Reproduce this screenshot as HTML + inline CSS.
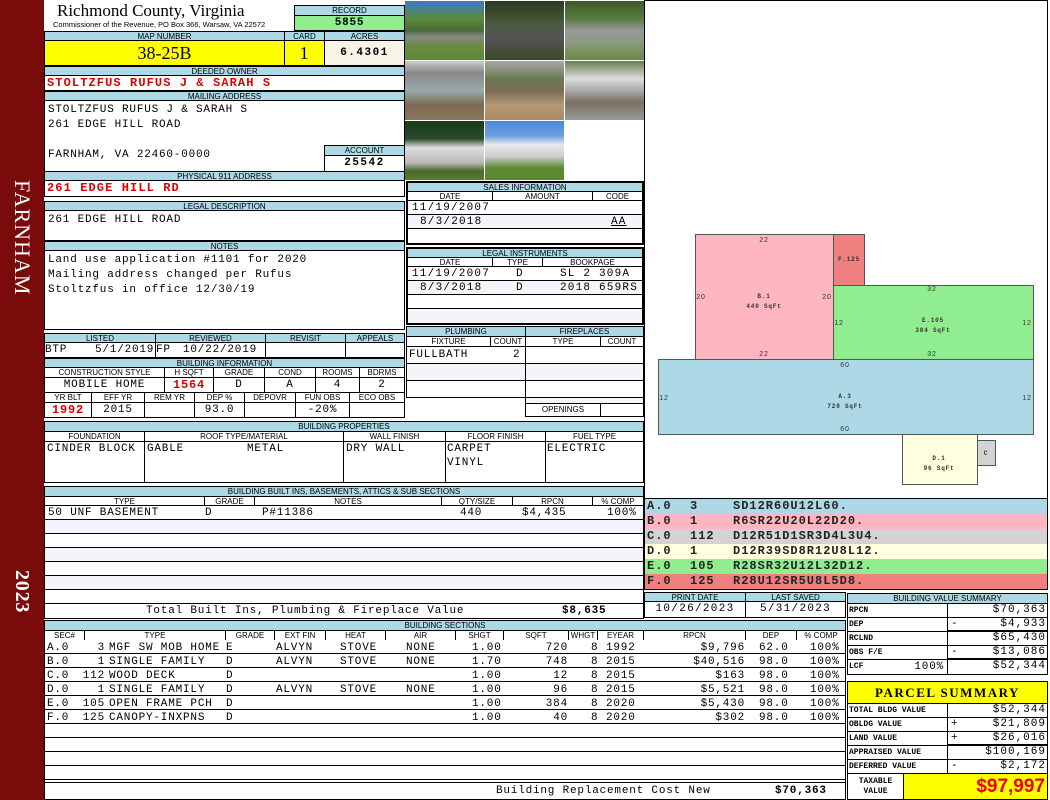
<!DOCTYPE html>
<html><head><meta charset="utf-8"><style>
*{margin:0;padding:0;box-sizing:border-box}
body{width:1050px;height:800px;background:#fff;position:relative;overflow:hidden;font-family:"Liberation Mono",monospace;font-size:11px;color:#000;letter-spacing:0.8px}
div{position:absolute}
.hd{background:#add8e6;border:1px solid #000;font:8px/9px "Liberation Sans",sans-serif;text-align:center;white-space:nowrap;overflow:hidden;letter-spacing:0}
.b{border:1px solid #000;background:#fff;white-space:nowrap;overflow:hidden}
.t{white-space:pre;line-height:14px}
.r{color:#d00;font-weight:bold}
.ph{overflow:hidden}
</style></head><body>
<div style="left:0;top:0;width:44px;height:800px;background:#7a0b0b"></div>
<div class="t" style="left:22px;top:180px;transform-origin:0 0;transform:rotate(90deg) translate(0,-11px);color:#fff;font:22px 'Liberation Serif',serif;letter-spacing:1px;line-height:22px">FARNHAM</div>
<div class="t" style="left:22px;top:570px;transform-origin:0 0;transform:rotate(90deg) translate(0,-11px);color:#fff;font:bold 20px 'Liberation Serif',serif;line-height:22px">2023</div>

<div class="t" style="left:57px;top:2px;font:17px/18px 'Liberation Serif',serif;letter-spacing:0">Richmond County, Virginia</div>
<div class="t" style="left:53px;top:20px;font:7.5px/9px 'Liberation Sans',sans-serif;letter-spacing:0">Commissioner of the Revenue, PO Box 366, Warsaw, VA 22572</div>
<div class="hd" style="left:294px;top:5px;width:111px;height:11px">RECORD</div>
<div class="b" style="left:294px;top:15px;width:111px;height:16px;background:#90ee90;text-align:center;font-weight:bold;line-height:14px">5855</div>
<div class="hd" style="left:44px;top:31px;width:241px;height:10px">MAP NUMBER</div>
<div class="hd" style="left:284px;top:31px;width:41px;height:10px">CARD</div>
<div class="hd" style="left:324px;top:31px;width:81px;height:10px">ACRES</div>
<div class="b" style="left:44px;top:40px;width:241px;height:26px;background:#ff0;text-align:center;font:18px/24px 'Liberation Serif',serif;letter-spacing:0">38-25B</div>
<div class="b" style="left:284px;top:40px;width:41px;height:26px;background:#ff0;text-align:center;font:18px/24px 'Liberation Serif',serif">1</div>
<div class="b" style="left:324px;top:40px;width:81px;height:26px;background:#f6f4e6;text-align:center;font-weight:bold;line-height:24px;letter-spacing:1.5px">6.4301</div>
<div class="hd" style="left:44px;top:66px;width:361px;height:10px">DEEDED OWNER</div>
<div class="b r" style="left:44px;top:75px;width:361px;height:16px;padding-left:2px;line-height:14px;font-size:12px;letter-spacing:1.1px">STOLTZFUS RUFUS J &amp; SARAH S</div>
<div class="hd" style="left:44px;top:91px;width:361px;height:10px">MAILING ADDRESS</div>
<div class="b" style="left:44px;top:100px;width:361px;height:72px;padding:2px 0 0 3px;line-height:15px">STOLTZFUS RUFUS J &amp; SARAH S<br>261 EDGE HILL ROAD<br><br>FARNHAM, VA 22460-0000</div>
<div class="hd" style="left:324px;top:145px;width:81px;height:11px">ACCOUNT</div>
<div class="b" style="left:324px;top:155px;width:81px;height:17px;text-align:center;font-weight:bold;line-height:15px;letter-spacing:1.5px">25542</div>
<div class="hd" style="left:44px;top:171px;width:361px;height:10px">PHYSICAL 911 ADDRESS</div>
<div class="b r" style="left:44px;top:180px;width:361px;height:17px;padding-left:2px;line-height:15px;font-size:12px;letter-spacing:1.1px">261 EDGE HILL RD</div>
<div class="hd" style="left:44px;top:201px;width:361px;height:10px">LEGAL DESCRIPTION</div>
<div class="b" style="left:44px;top:210px;width:361px;height:31px;padding:2px 3px;line-height:14px">261 EDGE HILL ROAD</div>
<div class="hd" style="left:44px;top:241px;width:361px;height:10px">NOTES</div>
<div class="b" style="left:44px;top:250px;width:361px;height:80px;padding:2px 3px;line-height:15px">Land use application #1101 for 2020<br>Mailing address changed per Rufus<br>Stoltzfus in office 12/30/19</div>

<div class="hd" style="left:44px;top:333px;width:112px;height:10px">LISTED</div>
<div class="hd" style="left:155px;top:333px;width:111px;height:10px">REVIEWED</div>
<div class="hd" style="left:265px;top:333px;width:81px;height:10px">REVISIT</div>
<div class="hd" style="left:345px;top:333px;width:60px;height:10px">APPEALS</div>
<div class="b" style="left:44px;top:342px;width:112px;height:16px;line-height:14px">BTP<span style="position:absolute;left:50px">5/1/2019</span></div>
<div class="b" style="left:155px;top:342px;width:111px;height:16px;line-height:14px">FP<span style="position:absolute;left:27px">10/22/2019</span></div>
<div class="b" style="left:265px;top:342px;width:81px;height:16px"></div>
<div class="b" style="left:345px;top:342px;width:60px;height:16px"></div>
<div class="hd" style="left:44px;top:358px;width:361px;height:10px">BUILDING INFORMATION</div>
<div class="hd" style="left:44px;top:367px;width:121px;height:11px;background:#fff">CONSTRUCTION STYLE</div>
<div class="hd" style="left:164px;top:367px;width:50px;height:11px;background:#fff">H SQFT</div>
<div class="hd" style="left:213px;top:367px;width:52px;height:11px;background:#fff">GRADE</div>
<div class="hd" style="left:264px;top:367px;width:52px;height:11px;background:#fff">COND</div>
<div class="hd" style="left:315px;top:367px;width:45px;height:11px;background:#fff">ROOMS</div>
<div class="hd" style="left:359px;top:367px;width:46px;height:11px;background:#fff">BDRMS</div>
<div class="b" style="left:44px;top:377px;width:121px;height:16px;text-align:center;line-height:14px">MOBILE HOME</div>
<div class="b r" style="left:164px;top:377px;width:50px;height:16px;text-align:center;line-height:14px;font-size:12px">1564</div>
<div class="b" style="left:213px;top:377px;width:52px;height:16px;text-align:center;line-height:14px">D</div>
<div class="b" style="left:264px;top:377px;width:52px;height:16px;text-align:center;line-height:14px">A</div>
<div class="b" style="left:315px;top:377px;width:45px;height:16px;text-align:center;line-height:14px">4</div>
<div class="b" style="left:359px;top:377px;width:46px;height:16px;text-align:center;line-height:14px">2</div>
<div class="hd" style="left:44px;top:392px;width:48px;height:11px;background:#fff">YR BLT</div>
<div class="hd" style="left:91px;top:392px;width:54px;height:11px;background:#fff">EFF YR</div>
<div class="hd" style="left:144px;top:392px;width:51px;height:11px;background:#fff">REM YR</div>
<div class="hd" style="left:194px;top:392px;width:51px;height:11px;background:#fff">DEP %</div>
<div class="hd" style="left:244px;top:392px;width:52px;height:11px;background:#fff">DEPOVR</div>
<div class="hd" style="left:295px;top:392px;width:55px;height:11px;background:#fff">FUN OBS</div>
<div class="hd" style="left:349px;top:392px;width:56px;height:11px;background:#fff">ECO OBS</div>
<div class="b r" style="left:44px;top:402px;width:48px;height:16px;text-align:center;line-height:14px;font-size:12px">1992</div>
<div class="b" style="left:91px;top:402px;width:54px;height:16px;text-align:center;line-height:14px">2015</div>
<div class="b" style="left:144px;top:402px;width:51px;height:16px"></div>
<div class="b" style="left:194px;top:402px;width:51px;height:16px;text-align:center;line-height:14px">93.0</div>
<div class="b" style="left:244px;top:402px;width:52px;height:16px"></div>
<div class="b" style="left:295px;top:402px;width:55px;height:16px;text-align:center;line-height:14px">-20%</div>
<div class="b" style="left:349px;top:402px;width:56px;height:16px"></div>

<div class="ph" style="left:405px;top:1px;width:79px;height:59px;background:linear-gradient(#3a78c8 0,#5a8a3a 30%,#4a6a3a 50%,#888 60%,#6a8a40 75%,#5d8a35 100%)"></div>
<div class="ph" style="left:485px;top:1px;width:79px;height:59px;background:linear-gradient(#2a3a20,#4a5a40 40%,#555 60%,#3a4a2a 100%)"></div>
<div class="ph" style="left:565px;top:1px;width:79px;height:59px;background:linear-gradient(#3a5a2a,#5a7a40 30%,#999 50%,#8a9a80 70%,#6a8a40 100%)"></div>
<div class="ph" style="left:405px;top:61px;width:79px;height:59px;background:linear-gradient(#ccc 0,#888 20%,#9aa 50%,#7a6a50 75%,#8a7560 100%)"></div>
<div class="ph" style="left:485px;top:61px;width:79px;height:59px;background:linear-gradient(#a8a8a8,#6a7a50 30%,#7a6a55 50%,#b59a75 75%,#a88a65 100%)"></div>
<div class="ph" style="left:565px;top:61px;width:79px;height:59px;background:linear-gradient(#6a7a50,#ddd 30%,#aaa 50%,#7a7060 70%,#999 100%)"></div>
<div class="ph" style="left:405px;top:121px;width:79px;height:59px;background:linear-gradient(#1a3a1a,#2a4a2a 30%,#ddd 45%,#bbb 70%,#4a6a2a 85%,#5a7a30 100%)"></div>
<div class="ph" style="left:485px;top:121px;width:79px;height:59px;background:linear-gradient(#4a88d8,#6aa0e0 25%,#e8e8e8 40%,#ccc 60%,#5a8a30 80%,#5a8a30 100%)"></div>

<div class="b" style="left:406px;top:181px;width:238px;height:64px"></div>
<div class="hd" style="left:407px;top:182px;width:236px;height:10px">SALES INFORMATION</div>
<div class="hd" style="left:407px;top:191px;width:86px;height:10px;background:#fff">DATE</div>
<div class="hd" style="left:492px;top:191px;width:101px;height:10px;background:#fff">AMOUNT</div>
<div class="hd" style="left:592px;top:191px;width:51px;height:10px;background:#fff">CODE</div>
<div class="b" style="left:407px;top:200px;width:236px;height:15px;line-height:15px;padding-left:4px;letter-spacing:1.2px">11/19/2007</div>
<div class="b" style="left:407px;top:214px;width:236px;height:15px;line-height:15px;padding-left:12px;background:#f4f4fa;letter-spacing:1.2px">8/3/2018<span style="position:absolute;left:203px;text-decoration:underline">AA</span></div>
<div class="b" style="left:407px;top:228px;width:236px;height:16px"></div>
<div class="b" style="left:406px;top:247px;width:238px;height:78px"></div>
<div class="hd" style="left:407px;top:248px;width:236px;height:10px">LEGAL INSTRUMENTS</div>
<div class="hd" style="left:407px;top:257px;width:86px;height:10px;background:#fff">DATE</div>
<div class="hd" style="left:492px;top:257px;width:51px;height:10px;background:#fff">TYPE</div>
<div class="hd" style="left:542px;top:257px;width:101px;height:10px;background:#fff">BOOKPAGE</div>
<div class="b" style="left:407px;top:266px;width:236px;height:15px;line-height:15px;padding-left:4px;letter-spacing:1.2px">11/19/2007<span style="position:absolute;left:108px">D</span><span style="position:absolute;left:152px">SL 2 309A</span></div>
<div class="b" style="left:407px;top:280px;width:236px;height:15px;line-height:15px;padding-left:12px;background:#f4f4fa;letter-spacing:1.2px">8/3/2018<span style="position:absolute;left:108px">D</span><span style="position:absolute;left:152px">2018 659RS</span></div>
<div class="b" style="left:407px;top:294px;width:236px;height:15px"></div>
<div class="b" style="left:407px;top:308px;width:236px;height:16px;background:#f4f4fa"></div>

<div class="hd" style="left:406px;top:326px;width:120px;height:11px">PLUMBING</div>
<div class="hd" style="left:525px;top:326px;width:119px;height:11px">FIREPLACES</div>
<div class="hd" style="left:406px;top:336px;width:85px;height:11px;background:#fff">FIXTURE</div>
<div class="hd" style="left:490px;top:336px;width:36px;height:11px;background:#fff">COUNT</div>
<div class="hd" style="left:525px;top:336px;width:76px;height:11px;background:#fff">TYPE</div>
<div class="hd" style="left:600px;top:336px;width:44px;height:11px;background:#fff">COUNT</div>
<div class="b" style="left:406px;top:346px;width:120px;height:18px;line-height:16px;padding-left:2px">FULLBATH<span style="position:absolute;left:106px">2</span></div>
<div class="b" style="left:406px;top:363px;width:120px;height:18px;background:#f4f4fa"></div>
<div class="b" style="left:406px;top:380px;width:120px;height:18px"></div>
<div style="left:406px;top:397px;width:120px;height:1px;background:#000"></div>
<div class="b" style="left:525px;top:346px;width:119px;height:18px"></div>
<div class="b" style="left:525px;top:363px;width:119px;height:18px;background:#f4f4fa"></div>
<div class="b" style="left:525px;top:380px;width:119px;height:18px"></div>
<div class="b" style="left:525px;top:397px;width:119px;height:7px;background:#f4f4fa"></div>
<div class="b" style="left:525px;top:403px;width:76px;height:14px;font:8px/12px 'Liberation Sans',sans-serif;text-align:center;letter-spacing:0">OPENINGS</div>
<div class="b" style="left:600px;top:403px;width:44px;height:14px"></div>

<div class="hd" style="left:44px;top:421px;width:600px;height:11px">BUILDING PROPERTIES</div>
<div class="hd" style="left:44px;top:431px;width:101px;height:11px;background:#fff">FOUNDATION</div>
<div class="hd" style="left:144px;top:431px;width:200px;height:11px;background:#fff">ROOF TYPE/MATERIAL</div>
<div class="hd" style="left:343px;top:431px;width:103px;height:11px;background:#fff">WALL FINISH</div>
<div class="hd" style="left:445px;top:431px;width:101px;height:11px;background:#fff">FLOOR FINISH</div>
<div class="hd" style="left:545px;top:431px;width:99px;height:11px;background:#fff">FUEL TYPE</div>
<div class="b" style="left:44px;top:441px;width:101px;height:42px;padding:0 2px;line-height:14px">CINDER BLOCK</div>
<div class="b" style="left:144px;top:441px;width:200px;height:42px;padding:0 2px;line-height:14px">GABLE<span style="position:absolute;left:102px">METAL</span></div>
<div class="b" style="left:343px;top:441px;width:103px;height:42px;padding:0 2px;line-height:14px">DRY WALL</div>
<div class="b" style="left:445px;top:441px;width:101px;height:42px;padding:0 1px;line-height:14px">CARPET<br>VINYL</div>
<div class="b" style="left:545px;top:441px;width:99px;height:42px;padding:0 1px;line-height:14px">ELECTRIC</div>

<div class="hd" style="left:44px;top:486px;width:600px;height:11px">BUILDING BUILT INS, BASEMENTS, ATTICS &amp; SUB SECTIONS</div>
<div class="hd" style="left:44px;top:496px;width:161px;height:10px;background:#fff">TYPE</div>
<div class="hd" style="left:204px;top:496px;width:51px;height:10px;background:#fff">GRADE</div>
<div class="hd" style="left:254px;top:496px;width:188px;height:10px;background:#fff">NOTES</div>
<div class="hd" style="left:441px;top:496px;width:72px;height:10px;background:#fff">QTY/SIZE</div>
<div class="hd" style="left:512px;top:496px;width:81px;height:10px;background:#fff">RPCN</div>
<div class="hd" style="left:592px;top:496px;width:52px;height:10px;background:#fff">% COMP</div>
<div class="b" style="left:44px;top:505px;width:600px;height:15px;line-height:14px;padding-left:3px">50 UNF BASEMENT<span style="position:absolute;left:160px">D</span><span style="position:absolute;left:217px">P#11386</span><span style="position:absolute;left:415px">440</span><span style="position:absolute;left:477px">$4,435</span><span style="position:absolute;left:562px">100%</span></div>
<div class="b" style="left:44px;top:519px;width:600px;height:15px;background:#f4f4fa"></div>
<div class="b" style="left:44px;top:533px;width:600px;height:15px"></div>
<div class="b" style="left:44px;top:547px;width:600px;height:15px;background:#f4f4fa"></div>
<div class="b" style="left:44px;top:561px;width:600px;height:15px"></div>
<div class="b" style="left:44px;top:575px;width:600px;height:15px;background:#f4f4fa"></div>
<div class="b" style="left:44px;top:589px;width:600px;height:15px"></div>
<div class="b" style="left:44px;top:603px;width:600px;height:16px;line-height:15px"><span style="position:absolute;left:101px">Total Built Ins, Plumbing &amp; Fireplace Value</span><span style="position:absolute;left:517px;font-weight:bold">$8,635</span></div>

<div class="hd" style="left:44px;top:620px;width:802px;height:11px">BUILDING SECTIONS</div>
<div class="hd" style="left:44px;top:630px;width:41px;height:11px;background:#fff">SEC#</div>
<div class="hd" style="left:84px;top:630px;width:142px;height:11px;background:#fff">TYPE</div>
<div class="hd" style="left:225px;top:630px;width:50px;height:11px;background:#fff">GRADE</div>
<div class="hd" style="left:274px;top:630px;width:52px;height:11px;background:#fff">EXT FIN</div>
<div class="hd" style="left:325px;top:630px;width:61px;height:11px;background:#fff">HEAT</div>
<div class="hd" style="left:385px;top:630px;width:71px;height:11px;background:#fff">AIR</div>
<div class="hd" style="left:455px;top:630px;width:49px;height:11px;background:#fff">SHGT</div>
<div class="hd" style="left:503px;top:630px;width:66px;height:11px;background:#fff">SQFT</div>
<div class="hd" style="left:568px;top:630px;width:30px;height:11px;background:#fff">WHGT</div>
<div class="hd" style="left:597px;top:630px;width:47px;height:11px;background:#fff">EYEAR</div>
<div class="hd" style="left:643px;top:630px;width:103px;height:11px;background:#fff">RPCN</div>
<div class="hd" style="left:745px;top:630px;width:52px;height:11px;background:#fff">DEP</div>
<div class="hd" style="left:796px;top:630px;width:50px;height:11px;background:#fff">% COMP</div>
<div style="left:44px;top:640px;width:802px;height:160px;border:1px solid #000;border-top:none;background:repeating-linear-gradient(#fff 0,#fff 13px,#000 13px,#000 14px)"></div>
<div class="t" style="left:47px;top:641px">A.0
B.0
C.0
D.0
E.0
F.0</div>
<div class="t" style="left:70px;top:641px;width:35px;text-align:right">3
1
112
1
105
125</div>
<div class="t" style="left:109px;top:641px">MGF SW MOB HOME
SINGLE FAMILY
WOOD DECK
SINGLE FAMILY
OPEN FRAME PCH
CANOPY-INXPNS</div>
<div class="t" style="left:226px;top:641px">E
D
D
D
D
D</div>
<div class="t" style="left:276px;top:641px">ALVYN
ALVYN

ALVYN</div>
<div class="t" style="left:340px;top:641px">STOVE
STOVE

STOVE</div>
<div class="t" style="left:406px;top:641px">NONE
NONE

NONE</div>
<div class="t" style="left:472px;top:641px">1.00
1.70
1.00
1.00
1.00
1.00</div>
<div class="t" style="left:503px;top:641px;width:65px;text-align:right">720
748
12
96
384
40</div>
<div class="t" style="left:591px;top:641px">8
8
8
8
8
8</div>
<div class="t" style="left:606px;top:641px">1992
2015
2015
2015
2020
2020</div>
<div class="t" style="left:643px;top:641px;width:102px;text-align:right">$9,796
$40,516
$163
$5,521
$5,430
$302</div>
<div class="t" style="left:759px;top:641px">62.0
98.0
98.0
98.0
98.0
98.0</div>
<div class="t" style="left:810px;top:641px">100%
100%
100%
100%
100%
100%</div>
<div class="b" style="left:44px;top:782px;width:802px;height:18px;line-height:17px;background:#fff"><span style="position:absolute;left:451px">Building Replacement Cost New</span><span style="position:absolute;left:730px;font-weight:bold">$70,363</span></div>

<div style="left:644px;top:0;width:404px;height:498px;border:1px solid #000;border-bottom:none"></div>
<svg style="position:absolute;left:0;top:0" width="1050" height="500" font-family="Liberation Sans" font-size="7">
<rect x="695.5" y="234.5" width="138" height="125" fill="#ffb6c1" stroke="#555"/>
<rect x="833.5" y="234.5" width="31" height="51" fill="#f08080" stroke="#555"/>
<rect x="833.5" y="285.5" width="200" height="74" fill="#90ee90" stroke="#555"/>
<rect x="658.5" y="359.5" width="375" height="75" fill="#add8e6" stroke="#555"/>
<rect x="902.5" y="434.5" width="75" height="50" fill="#ffffe0" stroke="#555"/>
<rect x="977.5" y="440.5" width="18" height="25" fill="#d3d3d3" stroke="#555"/>
<g fill="#333" text-anchor="middle">
<text x="764" y="242">22</text><text x="764" y="356">22</text><text x="701" y="299">20</text><text x="827" y="299">20</text>
<text x="764" y="298" font-family="Liberation Mono" font-weight="bold" font-size="6">B.1</text><text x="764" y="308" font-family="Liberation Mono" font-weight="bold" font-size="6">440 SqFt</text>
<text x="849" y="261" font-family="Liberation Mono" font-weight="bold" font-size="6">F.125</text>
<text x="932" y="291">32</text><text x="932" y="356">32</text><text x="839" y="325">12</text><text x="1027" y="325">12</text>
<text x="933" y="322" font-family="Liberation Mono" font-weight="bold" font-size="6">E.105</text><text x="933" y="332" font-family="Liberation Mono" font-weight="bold" font-size="6">384 SqFt</text>
<text x="845" y="367">60</text><text x="845" y="431">60</text><text x="664" y="400">12</text><text x="1027" y="400">12</text>
<text x="845" y="398" font-family="Liberation Mono" font-weight="bold" font-size="6">A.3</text><text x="845" y="408" font-family="Liberation Mono" font-weight="bold" font-size="6">720 SqFt</text>
<text x="939" y="460" font-family="Liberation Mono" font-weight="bold" font-size="6">D.1</text><text x="939" y="470" font-family="Liberation Mono" font-weight="bold" font-size="6">96 SqFt</text>
<text x="986" y="455" font-family="Liberation Mono" font-weight="bold" font-size="6">C</text>
</g></svg>

<div style="left:644px;top:498px;width:404px;height:92px;border:1px solid #000;font:bold 12px/15px 'Liberation Mono',monospace;letter-spacing:1px;color:#222">
<div style="left:0;top:0;width:402px;height:15px;background:#add8e6"></div>
<div style="left:0;top:15px;width:402px;height:15px;background:#ffb6c1"></div>
<div style="left:0;top:30px;width:402px;height:15px;background:#d3d3d3"></div>
<div style="left:0;top:45px;width:402px;height:15px;background:#ffffe0"></div>
<div style="left:0;top:60px;width:402px;height:15px;background:#90ee90"></div>
<div style="left:0;top:75px;width:402px;height:15px;background:#f08080"></div>
<div class="t" style="left:2px;top:0;line-height:15px">A.0
B.0
C.0
D.0
E.0
F.0</div>
<div class="t" style="left:45px;top:0;line-height:15px">3
1
112
1
105
125</div>
<div class="t" style="left:88px;top:0;line-height:15px">SD12R60U12L60.
R6SR22U20L22D20.
D12R51D1SR3D4L3U4.
D12R39SD8R12U8L12.
R28SR32U12L32D12.
R28U12SR5U8L5D8.</div>
</div>

<div class="hd" style="left:644px;top:592px;width:102px;height:10px">PRINT DATE</div>
<div class="hd" style="left:745px;top:592px;width:101px;height:10px">LAST SAVED</div>
<div class="b" style="left:644px;top:601px;width:102px;height:17px;text-align:center;line-height:15px;letter-spacing:1.3px">10/26/2023</div>
<div class="b" style="left:745px;top:601px;width:101px;height:17px;text-align:center;line-height:15px;letter-spacing:1.3px">5/31/2023</div>

<div class="hd" style="left:847px;top:593px;width:201px;height:11px">BUILDING VALUE SUMMARY</div>
<div style="left:847px;top:603px;width:201px;height:73px;font:bold 8px/14px 'Liberation Mono',monospace;letter-spacing:0">
<div class="b" style="left:0;top:0;width:101px;height:15px;padding-left:1px">RPCN</div>
<div class="b" style="left:0;top:14px;width:101px;height:15px;padding-left:1px">DEP</div>
<div class="b" style="left:0;top:28px;width:101px;height:15px;padding-left:1px">RCLND</div>
<div class="b" style="left:0;top:42px;width:101px;height:15px;padding-left:1px">OBS F/E</div>
<div class="b" style="left:0;top:56px;width:101px;height:16px;padding-left:1px">LCF<span style="position:absolute;right:3px;font:11px/14px 'Liberation Mono';letter-spacing:0.8px">100%</span></div>
</div>
<div style="left:947px;top:603px;width:101px;height:73px;font:11px/13px 'Liberation Mono',monospace;text-align:right;letter-spacing:1px">
<div class="b" style="left:0;top:0;width:101px;height:15px;padding-right:1px">$70,363</div>
<div class="b" style="left:0;top:14px;width:101px;height:15px;padding-right:1px;border-bottom:2px solid #000"><span style="position:absolute;left:3px">-</span>$4,933</div>
<div class="b" style="left:0;top:28px;width:101px;height:15px;padding-right:1px">$65,430</div>
<div class="b" style="left:0;top:42px;width:101px;height:15px;padding-right:1px;border-bottom:2px solid #000"><span style="position:absolute;left:3px">-</span>$13,086</div>
<div class="b" style="left:0;top:56px;width:101px;height:16px;padding-right:1px">$52,344</div>
</div>

<div class="b" style="left:847px;top:681px;width:201px;height:23px;background:#ff0;text-align:center;font:bold 13px/21px 'Liberation Serif',serif;letter-spacing:1.5px">PARCEL SUMMARY</div>
<div style="left:847px;top:703px;width:101px;height:71px;font:bold 8px/13px 'Liberation Mono',monospace;letter-spacing:0">
<div class="b" style="left:0;top:0;width:101px;height:15px;padding-left:1px">TOTAL BLDG VALUE</div>
<div class="b" style="left:0;top:14px;width:101px;height:15px;padding-left:1px">OBLDG VALUE</div>
<div class="b" style="left:0;top:28px;width:101px;height:15px;padding-left:1px">LAND VALUE</div>
<div class="b" style="left:0;top:42px;width:101px;height:15px;padding-left:1px">APPRAISED VALUE</div>
<div class="b" style="left:0;top:56px;width:101px;height:15px;padding-left:1px">DEFERRED VALUE</div>
</div>
<div style="left:947px;top:703px;width:101px;height:71px;font:11px/13px 'Liberation Mono',monospace;text-align:right;letter-spacing:1px">
<div class="b" style="left:0;top:0;width:101px;height:15px;padding-right:1px">$52,344</div>
<div class="b" style="left:0;top:14px;width:101px;height:15px;padding-right:1px"><span style="position:absolute;left:3px">+</span>$21,809</div>
<div class="b" style="left:0;top:28px;width:101px;height:15px;padding-right:1px;border-bottom:2px solid #000"><span style="position:absolute;left:3px">+</span>$26,016</div>
<div class="b" style="left:0;top:42px;width:101px;height:15px;padding-right:1px">$100,169</div>
<div class="b" style="left:0;top:56px;width:101px;height:15px;padding-right:1px"><span style="position:absolute;left:3px">-</span>$2,172</div>
</div>
<div class="b" style="left:847px;top:773px;width:57px;height:27px;text-align:center;font:bold 8px/10px 'Liberation Mono',monospace;padding-top:3px;letter-spacing:0">TAXABLE<br>VALUE</div>
<div class="b" style="left:903px;top:773px;width:145px;height:27px;background:#ff0;text-align:right;padding-right:2px;color:#e00;font:bold 19px/25px 'Liberation Sans',sans-serif;letter-spacing:0">$97,997</div>
</body></html>
